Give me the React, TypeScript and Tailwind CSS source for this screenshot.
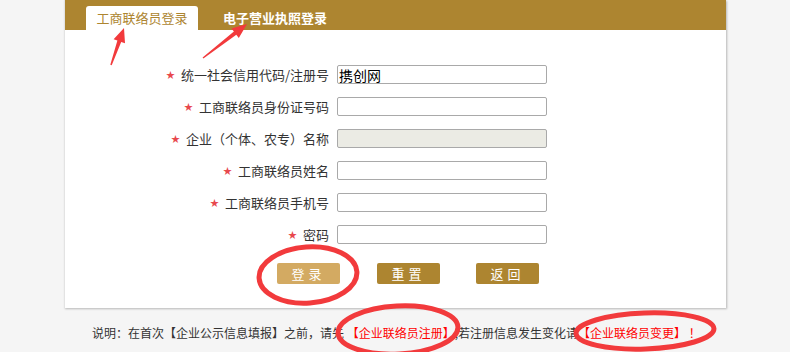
import React from "react";

const FONT = "font-['Microsoft_YaHei','Noto_Sans_CJK_SC','Noto_Sans',sans-serif]";

const rows = [
  { label: "统一社会信用代码/注册号", value: "携创网" },
  { label: "工商联络员身份证号码" },
  { label: "企业（个体、农专）名称", disabled: true },
  { label: "工商联络员姓名" },
  { label: "工商联络员手机号" },
  { label: "密码", password: true },
];

export default function App() {
  return (
    <div className={`relative h-[352px] w-full overflow-hidden bg-[#f5f5f5] text-[#333] ${FONT}`}>
      {/* card */}
      <div className="mx-auto w-[662px] border-l border-[#e3e3e3] bg-white shadow-[1px_1px_2px_rgba(0,0,0,0.25)]">
        <div className="flex h-[30px] items-end bg-[#ad8530] pl-[21px]">
          <div className="flex h-[24px] w-[112px] items-center justify-center rounded-t-[3px] bg-white text-[13px] text-[#ad8530]">
            工商联络员登录
          </div>
          <div className="ml-[25px] flex h-[24px] items-center text-[13px] font-semibold text-white">
            电子营业执照登录
          </div>
        </div>

        <div className="pb-[24px] pt-[35px]">
          <div className="grid grid-cols-[264px_210px] gap-x-[8px] gap-y-[13px]">
            {rows.map((r) => (
              <React.Fragment key={r.label}>
                <label className="flex h-[19px] items-center justify-end text-[13px] text-[#333]">
                  <span className="mr-[6px] text-[9px] text-[#e8484d]">★</span>
                  {r.label}
                </label>
                <input
                  type={r.password ? "password" : "text"}
                  defaultValue={r.value}
                  disabled={r.disabled}
                  className={`h-[19px] w-[210px] rounded-[2px] border border-[#a9a9a9] px-[1px] text-[14px] leading-none text-black outline-none ${
                    r.disabled ? "bg-[#ebebe4]" : "bg-white"
                  }`}
                />
              </React.Fragment>
            ))}
          </div>

          <div className="mt-[19px] flex pl-[212px]">
            <button className="h-[21px] w-[63px] rounded-[2px] bg-[#d3aa62] text-[13px] tracking-[4px] text-white">
              登录
            </button>
            <button className="ml-[37px] h-[21px] w-[63px] rounded-[2px] bg-[#ad8530] text-[13px] tracking-[4px] text-white">
              重置
            </button>
            <button className="ml-[36px] h-[21px] w-[63px] rounded-[2px] bg-[#ad8530] text-[13px] tracking-[4px] text-white">
              返回
            </button>
          </div>
        </div>
      </div>

      {/* note */}
      <p className="mt-[17px] pl-[92px] text-[12px] leading-[16px] whitespace-nowrap text-[#333]">
        说明：在首次【企业公示信息填报】之前，请先
        <span className="text-[#f00]"> 【企业联络员注册】</span>,若注册信息发生变化请
        <span className="text-[#f00]">【企业联络员变更】 ！</span>
      </p>

      {/* red annotations */}
      <svg className="pointer-events-none absolute left-0 top-0" width="790" height="352" viewBox="0 0 790 352">
        <g fill="none" stroke="#f23a3c" strokeWidth="5">
          <ellipse cx="308" cy="275" rx="49" ry="28" transform="rotate(-4 308 275)" />
          <ellipse cx="398" cy="330" rx="60" ry="24" transform="rotate(-3 398 330)" />
          <ellipse cx="645" cy="331" rx="69" ry="18" transform="rotate(-2 645 331)" />
        </g>
        <g fill="#f23a3c">
          <polygon points="124,28 125,43.2 121.2,41.9 111.7,65.2 110.3,64.8 117.4,40.5 113.6,39.2" />
          <polygon points="247,24 238.8,37.9 236.3,34.8 203.4,58.6 202.6,57.4 233.9,31.6 231.4,28.5" />
        </g>
      </svg>
    </div>
  );
}
